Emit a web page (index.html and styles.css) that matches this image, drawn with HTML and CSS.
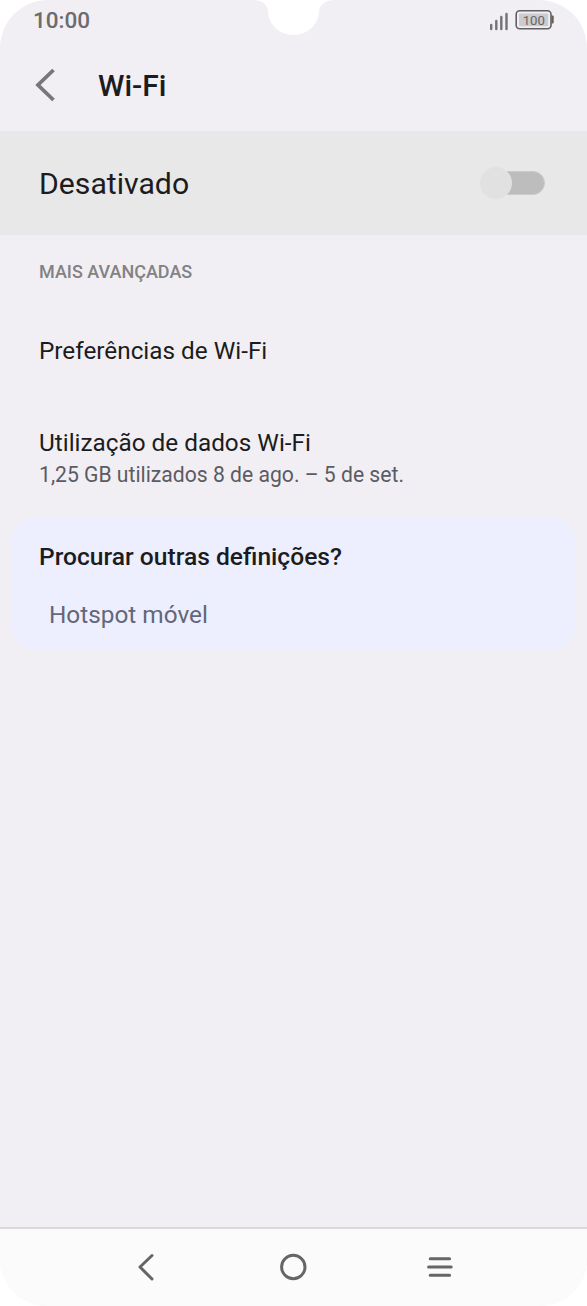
FILE: index.html
```html
<!DOCTYPE html>
<html lang="pt">
<head>
<meta charset="utf-8">
<title>Wi-Fi</title>
<link rel="stylesheet" href="styles.css">
</head>
<body>
<div class="phone">
  <svg class="notch" width="78" height="36" viewBox="0 0 78 36"><path d="M0 0C9 1 12 5 13 11A25.500 24 0 0 0 64 11C65 5 69 1 78 0Z" fill="#fff"/></svg>
  <header class="status">
    <span class="time">10:00</span>
    <svg class="indicators" width="66" height="24" viewBox="0 0 66 24">
      <path d="M3.200 20V16M8.300 20V12M13.300 20V8M18.500 20V5" fill="none" stroke="#737274" stroke-width="2.400" stroke-linecap="round"/>
      <rect x="28.200" y="1.800" width="34.800" height="18" rx="3.500" fill="#f1eff3" stroke="#5f5e60" stroke-width="1.600"/>
      <rect x="31" y="4.600" width="29.200" height="12.600" rx="1" fill="#cccbcd"/>
      <path d="M63.500 6.500h1.200q1 0 1 1v6q0 1-1 1h-1.200z" fill="#5f5e60"/>
      <text class="charge" x="45.800" y="15.600" text-anchor="middle">100</text>
    </svg>
  </header>
  <div class="appbar">
    <svg class="back" width="24" height="34" viewBox="0 0 24 34"><path d="M19.500 2L4 17L19.500 32" fill="none" stroke="#777678" stroke-width="3.800"/></svg>
    <h1 class="title">Wi-Fi</h1>
  </div>
  <div class="toggle-row">
    <span class="toggle-label">Desativado</span>
    <span class="switch"><span class="track"></span><span class="thumb"></span></span>
  </div>
  <main class="content">
    <h2 class="section">MAIS AVANÇADAS</h2>
    <div class="pref"><span class="item">Preferências de Wi-Fi</span></div>
    <div class="usage">
      <span class="item">Utilização de dados Wi-Fi</span>
      <span class="summary">1,25 GB utilizados 8 de ago. – 5 de set.</span>
    </div>
    <section class="card">
      <h3 class="card-title">Procurar outras definições?</h3>
      <a class="link">Hotspot móvel</a>
    </section>
  </main>
  <nav class="navbar">
    <svg width="28" height="30" viewBox="0 0 28 30"><path d="M20 3.500L8 15L20 27" fill="none" stroke="#666" stroke-width="3" stroke-linecap="round" stroke-linejoin="round"/></svg>
    <svg width="28" height="30" viewBox="0 0 28 30"><circle cx="14.300" cy="15" r="11.700" fill="none" stroke="#666" stroke-width="3"/></svg>
    <svg width="28" height="30" viewBox="0 0 28 30"><path d="M4.200 6.800H23.600M2.600 15H25.200M4.200 23.200H23.600" fill="none" stroke="#666" stroke-width="3" stroke-linecap="round"/></svg>
  </nav>
</div>
</body>
</html>
```
FILE: styles.css
```css
* { box-sizing: border-box; }
body { margin: 0; background: #fff; font-family: Roboto, sans-serif; color: #1c1c20; }
h1, h2, h3 { margin: 0; font-weight: 500; }
svg { display: block; }
.phone { position: relative; display: flex; flex-direction: column; width: 587px; height: 1306px; overflow: hidden; border-radius: 48px; background: #f1eff3; }
.notch { position: absolute; top: 0; left: 255px; }
.status { display: flex; justify-content: space-between; height: 41px; padding: 9px 33px 0 33px; }
.time { margin-top: -1px; font-size: 22.500px; font-weight: 500; line-height: 24px; color: #6c6b6d; }
.charge { font-size: 13.200px; fill: #666567; }
.appbar { display: flex; align-items: center; height: 90px; padding-left: 34px; }
.title { margin-left: 40px; font-size: 30px; line-height: 34px; }
.back { margin-bottom: 3px; }
.toggle-row { display: flex; align-items: center; justify-content: space-between; height: 104px; padding: 2px 42px 0 39px; background: #e8e8e8; }
.toggle-label { font-size: 30.200px; line-height: 36px; }
.switch { display: flex; align-items: center; justify-content: flex-end; width: 65px; height: 32px; position: relative; margin-bottom: 3px; }
.track { width: 52px; height: 24px; border-radius: 12px; background: #bdbdbd; border: 1px solid #cbcbcb; }
.thumb { position: absolute; left: 0; top: 0; width: 32px; height: 32px; border-radius: 50%; background: #e1e1e1; }
.content { flex: 1; display: flex; flex-direction: column; }
.section { padding: 25px 39px 0; font-size: 18px; line-height: 24px; color: #828284; }
.pref { padding: 53px 39px 0; }
.item { display: block; font-size: 24.320px; line-height: 28px; white-space: nowrap; }
.usage { padding: 64px 39px 0; }
.summary { display: block; margin-top: 4px; font-size: 21.150px; line-height: 28px; color: #5b5b64; }
.card { height: 133px; margin: 28px 11px 0; padding: 26px 28px 0; border-radius: 25px; background: #edefff; }
.card-title { font-size: 24.600px; line-height: 28px; }
.link { display: block; margin: 30px 0 0 10px; font-size: 24.350px; line-height: 28px; color: #626779; }
.navbar { display: flex; justify-content: space-between; align-items: center; height: 79px; padding: 0 133px 2px 132px; border-top: 2px solid #d9d8db; background: #fbfbfb; }
```
